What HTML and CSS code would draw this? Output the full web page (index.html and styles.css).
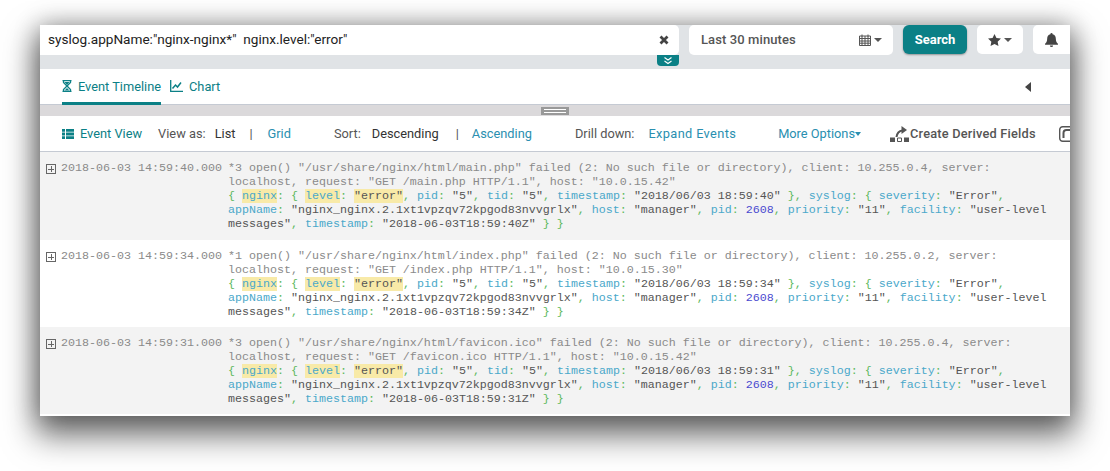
FILE: index.html
```
<!DOCTYPE html>
<html lang="en">
<head>
<meta charset="utf-8">
<title>Event Timeline</title>
<link rel="stylesheet" href="styles.css">
</head>
<body>
<div class="window">
  <header class="searchbar">
    <div class="query">
      <span class="query-text">syslog.appName:"nginx-nginx*"  nginx.level:"error"</span>
      <svg class="clear" viewBox="0 0 10 10" width="10" height="10"><path d="M1.500 1.500l7 7M8.500 1.500l-7 7" stroke="#444" stroke-width="2.800"/></svg>
      <span class="expander"><svg viewBox="0 0 10 8" width="10" height="8"><path d="M1.500 .5L5 3l3.500-2.500M1.500 4L5 6.500 8.500 4" fill="none" stroke="#fff" stroke-width="1.100"/></svg></span>
    </div>
    <div class="timepicker">
      <span class="time-text">Last 30 minutes</span>
      <svg class="cal" viewBox="0 0 12 12" width="12" height="12"><path d="M.5 2h11v9.500H.5zM.5 4.500h11M.5 7h11M.5 9.200h11M3 2v9.500M6 2v9.500M9 2v9.500M3 .5v2M9 .5v2" fill="none" stroke="#555" stroke-width="1"/></svg>
      <span class="caret wide"></span>
    </div>
    <button class="search-btn">Search</button>
    <div class="icon-btn star-btn">
      <svg viewBox="0 0 14 13" width="13" height="12"><path d="M7 0l2.100 4.400 4.900.6-3.600 3.300.9 4.700L7 10.700 2.700 13l.9-4.700L0 5l4.900-.6z" fill="#444"/></svg>
      <span class="caret wide"></span>
    </div>
    <div class="icon-btn bell-btn">
      <svg viewBox="0 0 12 13" width="13" height="14"><path d="M6 0a1 1 0 0 1 1 1.100C9 1.500 10 3 10 5c0 3 1 4 2 5v1H0v-1c1-1 2-2 2-5 0-2 1-3.500 3-3.900A1 1 0 0 1 6 0zM4.500 11.500h3a1.500 1.500 0 0 1-3 0z" fill="#444"/></svg>
    </div>
  </header>

  <nav class="tabs">
    <div class="tab active">
      <svg viewBox="0 0 10 12" width="10" height="12"><path d="M.5 .7h9M.5 11.300h9M1.500 1v1.500L5 6l3.500-3.500V1M1.500 11V9.500L5 6l3.500 3.500V11" fill="none" stroke="#0b8086" stroke-width="1.300"/><path d="M2.500 2h5L5 5zM2.500 10.500L5 8l2.500 2.500z" fill="#0b8086"/></svg>
      <span>Event Timeline</span>
    </div>
    <div class="tab">
      <svg viewBox="0 0 13 12" width="13" height="12"><path d="M.7 0v11.300H13" fill="none" stroke="#0b8086" stroke-width="1.300"/><path d="M2.500 8.500L5.500 5l2 2 3.500-4.500" fill="none" stroke="#0b8086" stroke-width="1.500"/></svg>
      <span>Chart</span>
    </div>
    <span class="collapse"></span>
  </nav>

  <div class="splitter"><span class="grip"></span></div>

  <div class="toolbar">
    <span class="view-link">
      <svg viewBox="0 0 12 10" width="12" height="10"><path d="M0 0h3v2.800H0zM4 0h8v2.800H4zM0 3.600h3v2.800H0zM4 3.600h8v2.800H4zM0 7.200h3V10H0zM4 7.200h8V10H4z" fill="#0b8086"/></svg>
      <span>Event View</span>
    </span>
    <span class="muted view-as">View as:</span>
    <span class="strong list">List</span>
    <span class="muted bar first-bar">|</span>
    <span class="link grid">Grid</span>
    <span class="muted sort">Sort:</span>
    <span class="strong desc">Descending</span>
    <span class="muted bar second-bar">|</span>
    <span class="link asc">Ascending</span>
    <span class="muted drill">Drill down:</span>
    <span class="link expand">Expand Events</span>
    <span class="link more">More Options<span class="caret blue"></span></span>
    <span class="derive">
      <svg viewBox="0 0 19 17" width="19" height="17"><path d="M0 12.500h5V17H0zM14 12.500h5V17h-5z" fill="#555"/><path d="M7.500 13h4v3.500h-4z" fill="none" stroke="#555"/><path d="M6.500 12c.5-4 2.500-6 6-6.500" fill="none" stroke="#555" stroke-width="2"/><path d="M11.500 1l5.500 4-5.500 4z" fill="#555"/></svg>
      <span>Create Derived Fields</span>
    </span>
    <svg class="copy" viewBox="0 0 16 16" width="16" height="16"><rect x=".7" y=".7" width="14.600" height="14.600" rx="3" fill="none" stroke="#555" stroke-width="1.400"/><path d="M4.500 12V7a3 3 0 0 1 3-3H16" fill="none" stroke="#555" stroke-width="2"/></svg>
  </div>

  <main class="events">
    <article class="event shaded first">
      <span class="plus"></span>
      <time class="stamp">2018-06-03 14:59:40.000</time>
      <div class="body">
        <div>*3 open() "/usr/share/nginx/html/main.php" failed (2: No such file or directory), client: 10.255.0.4, server:</div>
        <div>localhost, request: "GET /main.php HTTP/1.1", host: "10.0.15.42"</div>
        <div class="code"><i>{ </i><mark><b>nginx</b></mark><i>: { </i><mark><b>level</b></mark><i>: </i><mark>"error"</mark><i>, </i><b>pid</b><i>: </i>"5"<i>, </i><b>tid</b><i>: </i>"5"<i>, </i><b>timestamp</b><i>: </i>"2018/06/03 18:59:40"<i> }, </i><b>syslog</b><i>: { </i><b>severity</b><i>: </i>"Error"<i>,</i></div>
        <div class="code"><b>appName</b><i>: </i>"nginx_nginx.2.1xt1vpzqv72kpgod83nvvgrlx"<i>, </i><b>host</b><i>: </i>"manager"<i>, </i><b>pid</b><i>: </i><u>2608</u><i>, </i><b>priority</b><i>: </i>"11"<i>, </i><b>facility</b><i>: </i>"user-level</div>
        <div class="code">messages"<i>, </i><b>timestamp</b><i>: </i>"2018-06-03T18:59:40Z"<i> } }</i></div>
      </div>
    </article>
    <article class="event">
      <span class="plus"></span>
      <time class="stamp">2018-06-03 14:59:34.000</time>
      <div class="body">
        <div>*1 open() "/usr/share/nginx/html/index.php" failed (2: No such file or directory), client: 10.255.0.2, server:</div>
        <div>localhost, request: "GET /index.php HTTP/1.1", host: "10.0.15.30"</div>
        <div class="code"><i>{ </i><mark><b>nginx</b></mark><i>: { </i><mark><b>level</b></mark><i>: </i><mark>"error"</mark><i>, </i><b>pid</b><i>: </i>"5"<i>, </i><b>tid</b><i>: </i>"5"<i>, </i><b>timestamp</b><i>: </i>"2018/06/03 18:59:34"<i> }, </i><b>syslog</b><i>: { </i><b>severity</b><i>: </i>"Error"<i>,</i></div>
        <div class="code"><b>appName</b><i>: </i>"nginx_nginx.2.1xt1vpzqv72kpgod83nvvgrlx"<i>, </i><b>host</b><i>: </i>"manager"<i>, </i><b>pid</b><i>: </i><u>2608</u><i>, </i><b>priority</b><i>: </i>"11"<i>, </i><b>facility</b><i>: </i>"user-level</div>
        <div class="code">messages"<i>, </i><b>timestamp</b><i>: </i>"2018-06-03T18:59:34Z"<i> } }</i></div>
      </div>
    </article>
    <article class="event shaded">
      <span class="plus"></span>
      <time class="stamp">2018-06-03 14:59:31.000</time>
      <div class="body">
        <div>*3 open() "/usr/share/nginx/html/favicon.ico" failed (2: No such file or directory), client: 10.255.0.4, server:</div>
        <div>localhost, request: "GET /favicon.ico HTTP/1.1", host: "10.0.15.42"</div>
        <div class="code"><i>{ </i><mark><b>nginx</b></mark><i>: { </i><mark><b>level</b></mark><i>: </i><mark>"error"</mark><i>, </i><b>pid</b><i>: </i>"5"<i>, </i><b>tid</b><i>: </i>"5"<i>, </i><b>timestamp</b><i>: </i>"2018/06/03 18:59:31"<i> }, </i><b>syslog</b><i>: { </i><b>severity</b><i>: </i>"Error"<i>,</i></div>
        <div class="code"><b>appName</b><i>: </i>"nginx_nginx.2.1xt1vpzqv72kpgod83nvvgrlx"<i>, </i><b>host</b><i>: </i>"manager"<i>, </i><b>pid</b><i>: </i><u>2608</u><i>, </i><b>priority</b><i>: </i>"11"<i>, </i><b>facility</b><i>: </i>"user-level</div>
        <div class="code">messages"<i>, </i><b>timestamp</b><i>: </i>"2018-06-03T18:59:31Z"<i> } }</i></div>
      </div>
    </article>
  </main>
</div>
</body>
</html>
```

FILE: styles.css
```
* { box-sizing: border-box; }
html, body { margin: 0; height: 471px; overflow: hidden; background: #fff; }
body { padding: 25px 40px 0; font-family: Roboto, sans-serif; font-size: 13px; }
svg { display: block; flex: none; }

.window { width: 1030px; height: 391px; background: #fff; overflow: hidden; display: flex; flex-direction: column; box-shadow: 0 0 24px rgba(0,0,0,.32), 0 16px 30px 4px rgba(0,0,0,.55); }

.searchbar { height: 44px; flex: none; background: #e0e3e6; display: flex; align-items: flex-start; }
.query { width: 639px; height: 30px; background: #fff; border-radius: 0 5px 5px 0; display: flex; align-items: center; padding: 0 0 2px 8px; position: relative; }
.query-text { flex: 1; white-space: pre; color: #222; font-size: 13.600px; }
.clear { margin: 2px 10px 0 0; }
.expander { position: absolute; right: 0; top: 30px; width: 22px; height: 11px; background: #0b8086; border-radius: 0 0 4px 4px; display: flex; justify-content: center; align-items: center; }
.timepicker { width: 204px; height: 30px; margin-left: 10px; background: #fff; border-radius: 5px; display: flex; align-items: center; padding: 0 11px 0 12px; color: #555; }
.time-text { flex: 1; letter-spacing: .1px; font-weight: 500; margin-bottom: 2px; }
.caret { display: inline-block; width: 0; height: 0; border-left: 3.500px solid transparent; border-right: 3.500px solid transparent; border-top: 4px solid #555; }
.caret.wide { border-left-width: 4px; border-right-width: 4px; }
.cal { margin-right: 3px; }
.search-btn { width: 64px; height: 29px; margin-left: 10px; border: 0; padding: 0 0 1px; background: #0b8086; color: #fff; border-radius: 6px; font: 700 13px Roboto, sans-serif; box-shadow: 0 1px 2px rgba(0,0,0,.35); }
.icon-btn { height: 29px; margin-left: 10px; background: #fff; border-radius: 5px; display: flex; align-items: center; justify-content: center; gap: 3px; }
.star-btn { width: 46px; }
.bell-btn { width: 37px; border-radius: 5px 0 0 5px; }

.tabs { height: 36px; flex: none; background: #fff; border-bottom: 1px solid #c5cad3; display: flex; padding-left: 22px; gap: 9px; align-items: stretch; position: relative; font-size: 12.800px; }
.tab { display: flex; align-items: center; gap: 6px; color: #0b8086; padding-bottom: 2px; margin-bottom: -1px; }
.tab.active { border-bottom: 3px solid #0b8086; padding-bottom: 0; padding-top: 1px; }
.collapse { position: absolute; right: 39px; top: 13px; border-top: 5px solid transparent; border-bottom: 5px solid transparent; border-right: 6px solid #444; }

.splitter { height: 11px; flex: none; background: #dbd9db; display: flex; justify-content: center; align-items: center; }
.grip { width: 28px; height: 8px; background: linear-gradient(#fff,#fff) center 2px/22px 1px no-repeat, linear-gradient(#fff,#fff) center 5px/22px 1px no-repeat, #999; }

.toolbar { height: 36px; flex: none; background: #fff; border-bottom: 1px solid #c5cad3; display: flex; align-items: center; padding-left: 22px; white-space: nowrap; font-size: 12.800px; }
.view-link { display: flex; align-items: center; gap: 6px; color: #0b8086; }
.muted { color: #555; }
.strong { color: #333; }
.link { color: #2a8fb0; }
.view-as { margin-left: 16px; }
.list { margin-left: 9px; }
.first-bar { margin-left: 14px; }
.grid { margin-left: 15px; }
.sort { margin-left: 43px; }
.desc { margin-left: 11px; }
.second-bar { margin-left: 17px; }
.asc { margin-left: 13px; }
.drill { margin-left: 43px; }
.expand { margin-left: 14px; letter-spacing: .35px; }
.more { margin-left: 42px; display: flex; align-items: center; }
.caret.blue { border-top-color: #2a8fb0; }
.derive { margin-left: 29px; display: flex; align-items: center; gap: 1px; color: #555; font-weight: 500; letter-spacing: .2px; }
.copy { margin-left: 23px; }

.events { flex: 1; font: 11.670px/14px "Liberation Mono", monospace; color: #8a8a8a; }
.event { display: flex; align-items: flex-start; padding: 9px 0 9px 6px; height: 87px; }
.event.first { height: 88px; }
.body div { white-space: pre; }
.shaded { background: #f3f3f3; }
.plus { width: 10px; height: 10px; margin-top: 3px; border: 1px solid #666; background: linear-gradient(#666,#666) center/6px 1px no-repeat, linear-gradient(#666,#666) center/1px 6px no-repeat; flex: none; }
.stamp { margin-left: 5px; width: 167px; flex: none; }
.code { color: #555; }
.code b { font-weight: normal; color: #4aa8ca; }
.code i { font-style: normal; color: #5cb85c; }
.code u { text-decoration: none; color: #4a4ad0; }
mark { background: #f8eaa8; color: inherit; }
```
